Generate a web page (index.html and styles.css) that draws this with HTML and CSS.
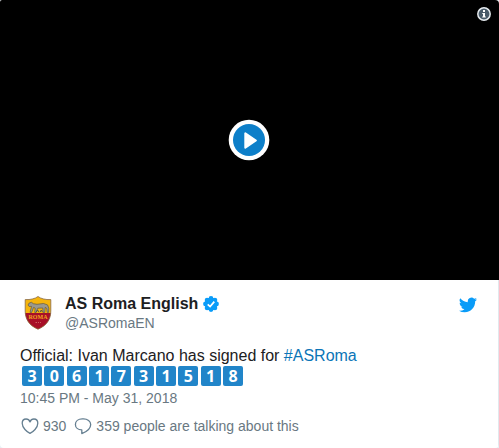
FILE: index.html
```
<!DOCTYPE html>
<html lang="en">
<head>
	<meta charset="utf-8">
	<title>AS Roma English</title>
	<link rel="stylesheet" href="styles.css">
</head>
<body>
	<article class="tweet">
		<div class="media">
			<button class="play" type="button" aria-label="Play video">
				<svg width="42" height="42" viewBox="0 0 42 42">
					<circle cx="21" cy="21" r="20.3" fill="#fff"/>
					<circle cx="21" cy="21" r="16" fill="#0d7fc9"/>
					<path d="M17.3 14.2v14.6l10.6-7.3z" fill="#fff" stroke="#fff" stroke-width="2" stroke-linejoin="round"/>
				</svg>
			</button>
			<button class="info" type="button" aria-label="Media info">
				<svg width="14" height="14" viewBox="0 0 14 14">
					<circle cx="7" cy="7" r="6.2" fill="#485a69" stroke="#e6ebef" stroke-width="1.5"/>
					<path d="M6 3h2v2H6zM5.3 6H8v3.4h.8v1.2H5.2V9.4H6V7.1h-.7z" fill="#fff"/>
				</svg>
			</button>
		</div>
		<div class="content">
			<header class="header">
				<a class="author" href="#">
					<svg class="avatar" width="36" height="36" viewBox="0 0 36 36" aria-hidden="true">
						<path d="M18 1.500C21 3.800 25.500 4.800 30.800 4.600V16C30.800 24 27 30.500 18 34.200 9 30.500 5.200 24 5.200 16V4.600C10.500 4.800 15 3.800 18 1.500z" fill="#f5b50c"/>
						<path d="M5.200 18h25.600C30 25.200 26.200 30.800 18 34.200 9.800 30.800 6 25.200 5.200 18z" fill="#a80f27"/>
						<path d="M18 1.500C21 3.800 25.500 4.800 30.800 4.600V16C30.800 24 27 30.500 18 34.200 9 30.500 5.200 24 5.200 16V4.600C10.500 4.800 15 3.800 18 1.500z" fill="none" stroke="#86684a" stroke-width=".8"/>
						<path d="M8 10l1.200-2 2.200-.7 2 1.400 3.600.6 6.500-.8 4 1.400 1.300 3.200-.2 4.300h-1.400l-.4-4-1.600-1-.4 5h-1.700l-.3-4.400-5 .2-1.600 4.200h-1.500l.5-4.200-1.600-.8-1.900 5h-1.700l1.600-6-2.400.1z" fill="#9b998d" stroke="#504b3c" stroke-width=".6"/>
						<path d="M16 17.200l1.600-2.200 1.200 2.200M20 17.200l1.300-2.200 1.200 2.200" fill="none" stroke="#5b5546" stroke-width="1"/>
						<text class="crest-name" x="18" y="24" text-anchor="middle">ROMA</text>
						<path d="M15.500 27.500h1.500M18 27.500h1M20 27.500h1" stroke="#c9605f" stroke-width="1"/>
					</svg>
					<span class="names">
						<span class="name">AS Roma English
							<svg class="verified" width="16" height="16" viewBox="0 0 16 16" aria-label="Verified account">
								<g fill="#0a9cf8">
									<circle cx="8" cy="8" r="6.4"/>
									<circle cx="8" cy="2.500" r="2.400"/><circle cx="11.900" cy="4.100" r="2.400"/>
									<circle cx="13.500" cy="8" r="2.400"/><circle cx="11.900" cy="11.900" r="2.400"/>
									<circle cx="8" cy="13.500" r="2.400"/><circle cx="4.100" cy="11.900" r="2.400"/>
									<circle cx="2.500" cy="8" r="2.400"/><circle cx="4.100" cy="4.100" r="2.400"/>
								</g>
								<path d="M4.700 8.300l2.400 2.300 4.200-5" fill="none" stroke="#fff" stroke-width="1.700"/>
							</svg>
						</span>
						<span class="handle">@ASRomaEN</span>
					</span>
				</a>
				<a class="bird" href="#" aria-label="View on Twitter">
					<svg width="18" height="18" viewBox="0 0 24 24">
						<path fill="#0a9cf8" d="M23.950 4.570a10 10 0 0 1-2.820.77 4.960 4.960 0 0 0 2.160-2.720c-.95.560-2 .96-3.130 1.180a4.920 4.920 0 0 0-8.380 4.480C7.690 8.090 4.070 6.130 1.640 3.160a4.920 4.920 0 0 0 1.520 6.570 4.900 4.900 0 0 1-2.230-.61v.06a4.920 4.920 0 0 0 3.950 4.830 5 5 0 0 1-2.210.08 4.940 4.940 0 0 0 4.600 3.420A9.870 9.870 0 0 1 0 19.540a14 14 0 0 0 7.550 2.210c9.050 0 14-7.500 14-13.980 0-.21 0-.42-.02-.63a9.940 9.940 0 0 0 2.460-2.550z"/>
					</svg>
				</a>
			</header>
			<p class="text">Official: Ivan Marcano has signed for <a class="hashtag" href="#">#ASRoma</a></p>
			<div class="digits">
				<span class="digit">3</span>
				<span class="digit">0</span>
				<span class="digit">6</span>
				<span class="digit">1</span>
				<span class="digit">7</span>
				<span class="digit">3</span>
				<span class="digit">1</span>
				<span class="digit">5</span>
				<span class="digit">1</span>
				<span class="digit">8</span>
			</div>
			<a class="date" href="#">10:45 PM - May 31, 2018</a>
			<footer class="actions">
				<a class="action" href="#" aria-label="930 likes">
					<svg width="19" height="20" viewBox="0 0 19 20" fill="none" stroke="#657f91" stroke-width="1.300" stroke-linejoin="round">
						<path d="M10 17.400C7 16 2.200 11.800 2.200 7.300 2.200 4.800 3.900 3 6.100 3 8 3 9.300 4.100 10 5.900 10.700 4.100 12 3 13.900 3c2.200 0 3.900 1.800 3.900 4.300 0 4.500-4.800 8.700-7.800 10.100z"/>
					</svg>
					930
				</a>
				<a class="action" href="#">
					<svg width="18" height="20" viewBox="0 0 18 20" fill="none" stroke="#657f91" stroke-width="1.300" stroke-linejoin="round">
						<path d="M7.800 13.900C4 13.800 1.400 11.500 1.400 8.400 1.400 5.200 4.300 2.900 8.300 2.900h1.200c4 0 7.200 2.400 7.200 5.700 0 4-3.900 7.200-8.900 9z"/>
					</svg>
					359 people are talking about this
				</a>
			</footer>
		</div>
	</article>
</body>
</html>
```
FILE: styles.css
```
body {
	margin: 0;
	background-color: #e8eff4;
	font-family: "Liberation Sans", Arial, sans-serif;
	font-size: 16px;
	line-height: 20px;
	color: #1c2022;
}
a {
	color: inherit;
	text-decoration: none;
}
button {
	padding: 0;
	border: 0;
	background: none;
	cursor: pointer;
}
svg {
	display: block;
	flex: none;
}
.tweet {
	position: relative;
	overflow: hidden;
	border-radius: 2px 4px 4px 4px;
	background-color: #fff;
}
.media {
	display: flex;
	align-items: center;
	justify-content: center;
	height: 280px;
	padding-right: 2px;
	background-color: #000;
}
.play {
	border-radius: 50%;
}
.info {
	position: absolute;
	top: 7px;
	right: 8px;
}
.content {
	padding: 14px 17px 12px 20px;
	border-right: 1px solid #e1e8ed;
}
.header {
	display: flex;
	justify-content: space-between;
	margin-bottom: 14px;
}
.author {
	display: flex;
	align-items: center;
	gap: 9px;
}
.crest-name {
	font: bold 6px "Liberation Serif", serif;
	fill: #f3a51c;
}
.names {
	display: flex;
	flex-direction: column;
}
.name {
	display: flex;
	align-items: center;
	gap: 5px;
	font-weight: bold;
}
.handle {
	font-size: 14px;
	line-height: 18px;
	color: #697882;
}
.bird {
	padding: 2px 4px 0 0;
}
.text {
	margin: 0;
}
.hashtag {
	color: #0b75b7;
}
.digits {
	display: flex;
	justify-content: space-between;
	width: 221px;
	margin-left: 2px;
}
.digit {
	width: 20px;
	border-radius: 2px;
	background-color: #2185c9;
	color: #fff;
	font-family: "Open Sans", sans-serif;
	font-weight: bold;
	text-align: center;
}
.date {
	display: block;
	margin-top: 2px;
	font-size: 14px;
	color: #697882;
}
.actions {
	display: flex;
	gap: 8px;
	margin-top: 8px;
	font-size: 14px;
	color: #697882;
}
.action {
	display: flex;
	gap: 4px;
}
```
